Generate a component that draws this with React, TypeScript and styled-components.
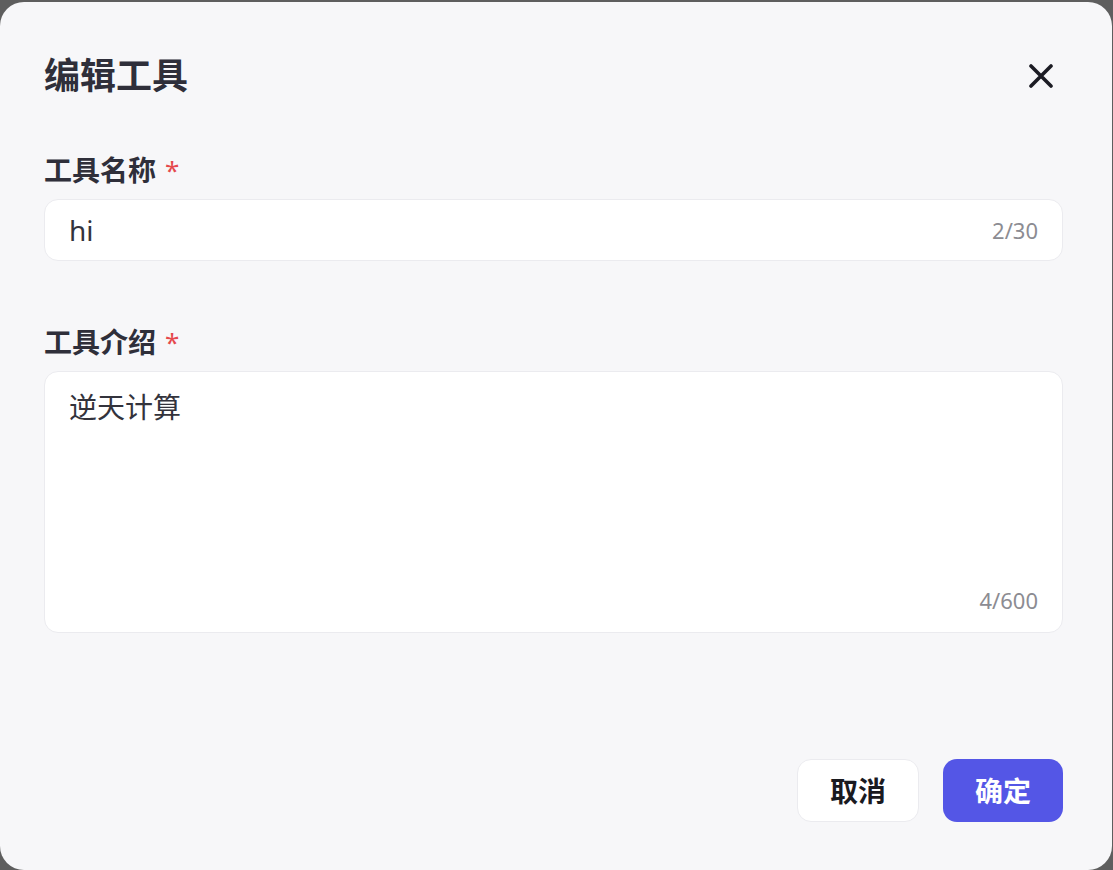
import { FC } from "react"
import styled, { createGlobalStyle } from "styled-components"

const Global = createGlobalStyle`
html, body{
  margin: 0;
  padding: 0;
  height: 100%;
  background: #5e5e5e;
  overflow: hidden;
}
#root{
  height: 100%;
}
*{
  box-sizing: border-box;
}
`

const Dialog = styled.div`
margin: 2px 1px 0 0;
height: 868px;
background: #f7f7f9;
border-radius: 24px;
padding: 52px 49px 48px 44px;
display: flex;
flex-direction: column;
font-family: "Noto Sans", "Noto Sans CJK SC", sans-serif;
color: #2f2f3a;
`

const Header = styled.div`
display: flex;
align-items: center;
justify-content: space-between;
margin-bottom: 56px;
.title{
  font: 700 36px/44px "Noto Sans", "Noto Sans CJK SC", sans-serif;
  margin: 0;
}
`

const Close = styled.button`
width: 44px;
height: 44px;
border: none;
background: transparent;
padding: 0;
display: flex;
align-items: center;
justify-content: center;
cursor: pointer;
color: #1c1c24;
`

const Field = styled.div<{ $gap?: number }>`
display: flex;
flex-direction: column;
margin-bottom: ${p => p.$gap ?? 0}px;
`

const Label = styled.label`
font: 700 28px/32px "Noto Sans", "Noto Sans CJK SC", sans-serif;
margin-bottom: 13px;
display: flex;
align-items: center;
.star{
  color: #e5484d;
  margin-left: 9px;
  font-size: 26px;
  font-weight: 400;
}
`

const Box = styled.div<{ $multi?: boolean }>`
background: #fff;
border: 1px solid #ebebef;
border-radius: 14px;
display: flex;
${p => p.$multi ? `
  height: 262px;
  flex-direction: column;
  padding: 18px 24px 18px 24px;
  .count{ align-self: flex-end; }
` : `
  height: 62px;
  align-items: center;
  padding: 0 24px;
`}
.value{
  flex: 1;
  font: 400 28px/34px "Noto Sans", "Noto Sans CJK SC", sans-serif;
  color: #33333c;
}
.count{
  font: 400 22px/28px "Noto Sans", "Noto Sans CJK SC", sans-serif;
  color: #8c8c92;
}
`

const Footer = styled.div`
margin-top: auto;
display: flex;
justify-content: flex-end;
gap: 24px;
`

const Button = styled.button<{ $primary?: boolean }>`
height: 63px;
padding: 0 32px;
border-radius: 14px;
font: 700 28px/1 "Noto Sans", "Noto Sans CJK SC", sans-serif;
cursor: pointer;
border: ${p => p.$primary ? "none" : "1px solid #ebebef"};
background: ${p => p.$primary ? "#5456e6" : "#fff"};
color: ${p => p.$primary ? "#fff" : "#1a1a1f"};
`

const App: FC = () => {
  return (
    <>
      <Global />
      <Dialog>
        <Header>
          <h2 className="title">编辑工具</h2>
          <Close aria-label="关闭">
            <svg width="24" height="24" viewBox="0 0 24 24" fill="none">
              <path d="M2 2L22 22M22 2L2 22" stroke="currentColor" strokeWidth="3.6" strokeLinecap="round" />
            </svg>
          </Close>
        </Header>
        <Field $gap={65}>
          <Label>工具名称<span className="star">*</span></Label>
          <Box>
            <div className="value">hi</div>
            <div className="count">2/30</div>
          </Box>
        </Field>
        <Field>
          <Label>工具介绍<span className="star">*</span></Label>
          <Box $multi>
            <div className="value">逆天计算</div>
            <div className="count">4/600</div>
          </Box>
        </Field>
        <Footer>
          <Button>取消</Button>
          <Button $primary>确定</Button>
        </Footer>
      </Dialog>
    </>
  )
}

export default App
